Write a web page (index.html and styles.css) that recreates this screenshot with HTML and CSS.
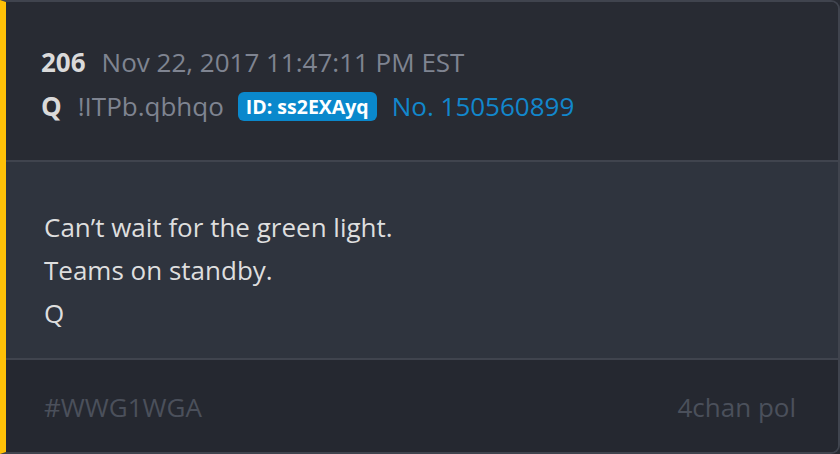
FILE: index.html
```html
<!DOCTYPE html>
<html lang="en">
<head>
    <meta charset="UTF-8">
    <meta name="viewport" content="width=device-width, initial-scale=1.0">
    <title>Post 206</title>
    <link rel="stylesheet" href="styles.css">
</head>
<body>
    <div class="post">
        <div class="post-header">
            <div class="meta-line">
                <span class="post-num">206</span>
                <span class="post-date">Nov 22, 2017 11:47:11 PM EST</span>
            </div>
            <div class="meta-line">
                <span class="post-name">Q</span>
                <span class="post-trip">!ITPb.qbhqo</span>
                <span class="post-id">ID: ss2EXAyq</span>
                <a class="post-link" href="#">No. 150560899</a>
            </div>
        </div>

        <div class="post-body">
            <p>Can’t wait for the green light.</p>
            <p>Teams on standby.</p>
            <p>Q</p>
        </div>

        <div class="post-footer">
            <span class="tag">#WWG1WGA</span>
            <span class="source">4chan pol</span>
        </div>
    </div>
</body>
</html>
```

FILE: styles.css
```css
body {
    font-family: 'Open Sans', sans-serif;
    margin: 0;
    padding: 0;
    background-color: #282b33;
}

.post {
    box-sizing: border-box;
    width: 840px;
    height: 454px;
    display: flex;
    flex-direction: column;
    border: 2px solid #40444e;
    border-left: 6px solid #ffc107;
    border-radius: 0 9px 9px 0;
    overflow: hidden;
}

.post-header {
    height: 160px;
    box-sizing: border-box;
    padding: 38px 34px 0 35px;
    background-color: #282b33;
    border-bottom: 2px solid #40444e;
}

.meta-line {
    display: flex;
    align-items: center;
    font-size: 26px;
    line-height: 44px;
    white-space: nowrap;
}

.post-num {
    font-weight: 700;
    color: #dadada;
    margin-right: 16px;
}

.post-name {
    font-weight: 700;
    color: #dadada;
    margin-right: 16px;
}

.post-date {
    color: #7f8491;
}

.post-trip {
    color: #7f8491;
    margin-right: 14px;
}

.post-id {
    background-color: #0a88cc;
    color: #fff;
    font-size: 19.5px;
    font-weight: 700;
    line-height: 29px;
    padding: 0 8px;
    border-radius: 6px;
    margin-right: 15px;
}

.post-link {
    color: #1287cc;
    text-decoration: none;
}

.post-body {
    flex: 1;
    padding: 44px 38px 0 38px;
    background-color: #2f343e;
    border-bottom: 2px solid #40444e;
    color: #dedede;
    font-size: 26px;
    line-height: 43px;
}

.post-body p {
    margin: 0;
}

.post-footer {
    height: 92px;
    box-sizing: border-box;
    display: flex;
    justify-content: space-between;
    align-items: center;
    padding: 2px 42px 0 38px;
    background-color: #252830;
    color: #4b505b;
    font-size: 26px;
}
```
